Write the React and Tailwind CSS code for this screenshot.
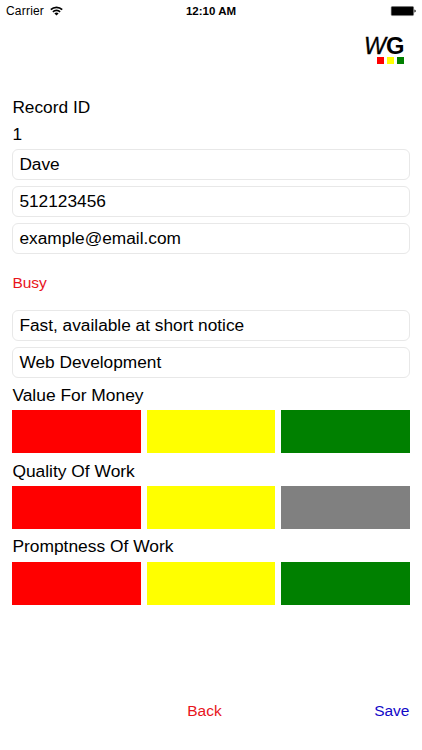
import React, { useState } from 'react';

const RATING_COLORS = ['bg-[#ff0000]', 'bg-[#ffff00]', 'bg-[#008000]'];

const StatusBar = () => (
  <div className="grid grid-cols-3 items-center h-[22px] px-[6px] text-black">
    <div className="flex items-center gap-[6px] text-[12px] tracking-[0.2px]">
      <span>Carrier</span>
      <svg width="13" height="10" viewBox="0 0 13 10" fill="none" stroke="black" strokeWidth="1.7">
        <path d="M0.8 3.7a8 8 0 0 1 11.4 0" />
        <path d="M2.9 5.9a5.1 5.1 0 0 1 7.2 0" />
        <path d="M6.5 9.6L4.4 7.5a3 3 0 0 1 4.2 0z" fill="black" stroke="none" />
      </svg>
    </div>
    <div className="pt-[2px] text-center text-[11.5px] font-bold">12:10 AM</div>
    <div className="flex justify-end">
      <svg width="26" height="11" viewBox="0 0 26 11">
        <rect x="1.2" y="0.6" width="22.4" height="9" rx="1" fill="black" stroke="#777" strokeWidth="0.5" />
        <path d="M24.4 3.6v3c1-.3 1.4-.9 1.4-1.5s-.4-1.2-1.4-1.5z" fill="#222" />
      </svg>
    </div>
  </div>
);

const Logo = () => (
  <div className="flex flex-col items-end">
    <svg width="44" height="34" viewBox="0 0 44 34" fontFamily="Liberation Sans, Arial, sans-serif" fontSize="24.5">
      <text x="3" y="26.3" fontStyle="italic" stroke="black" strokeWidth="0.3" textLength="22" lengthAdjust="spacingAndGlyphs">W</text>
      <text x="25" y="26.3" fontWeight="bold" textLength="18.5" lengthAdjust="spacingAndGlyphs">G</text>
    </svg>
    <div className="flex gap-[3px] -mt-[5px] pr-[1px]">
      {RATING_COLORS.map((color) => (
        <div key={color} className={`w-[7px] h-[7px] ${color}`} />
      ))}
    </div>
  </div>
);

const Field = ({ name, value, onChange }) => (
  <input
    type="text"
    name={name}
    value={value}
    onChange={onChange}
    className="block w-full h-[31px] px-[6px] text-[17.3px] bg-white border border-[#e8e8e8] rounded-[6px] focus:outline-none"
  />
);

const Rating = ({ label, score }) => (
  <div className="h-[75.7px]">
    <div className="h-[27.3px] leading-[24px] text-[17.4px]">{label}</div>
    <div className="grid grid-cols-3 gap-[6px] h-[43px]">
      {RATING_COLORS.map((color, index) => (
        <div key={color} className={index < score ? color : 'bg-[#808080]'} />
      ))}
    </div>
  </div>
);

const App = () => {
  const [record, setRecord] = useState({
    name: 'Dave',
    phone: '512123456',
    email: 'example@email.com',
    notes: 'Fast, available at short notice',
    trade: 'Web Development'
  });

  const handleChange = (e) => {
    setRecord({ ...record, [e.target.name]: e.target.value });
  };

  return (
    <div className="flex flex-col w-[422px] h-[750px] bg-white text-black font-['Liberation_Sans',Arial,sans-serif]">
      <StatusBar />

      <div className="flex justify-end pt-[6px] pr-[17px] h-[72px]">
        <Logo />
      </div>

      <div className="px-[12.4px]">
        <div className="h-[27px] leading-[26px] text-[17.3px]">Record ID</div>
        <div className="h-[28px] leading-[26px] text-[17.3px]">1</div>

        <div className="flex flex-col gap-[6px]">
          <Field name="name" value={record.name} onChange={handleChange} />
          <Field name="phone" value={record.phone} onChange={handleChange} />
          <Field name="email" value={record.email} onChange={handleChange} />
        </div>

        <button type="button" className="block h-[56px] pt-px text-[15.5px] text-[#e8141c]">Busy</button>

        <div className="flex flex-col gap-[6px]">
          <Field name="notes" value={record.notes} onChange={handleChange} />
          <Field name="trade" value={record.trade} onChange={handleChange} />
        </div>

        <div className="pt-[5px]">
          <Rating label="Value For Money" score={3} />
          <Rating label="Quality Of Work" score={2} />
          <Rating label="Promptness Of Work" score={3} />
        </div>
      </div>

      <div className="grid grid-cols-3 mt-auto mb-[29px] px-[12.5px] text-[15.5px] leading-[20px]">
        <button type="button" className="col-start-2 pr-[13px] text-[#e8141c]">Back</button>
        <button type="button" className="text-right text-[#1208c8]">Save</button>
      </div>
    </div>
  );
};

export default App;
